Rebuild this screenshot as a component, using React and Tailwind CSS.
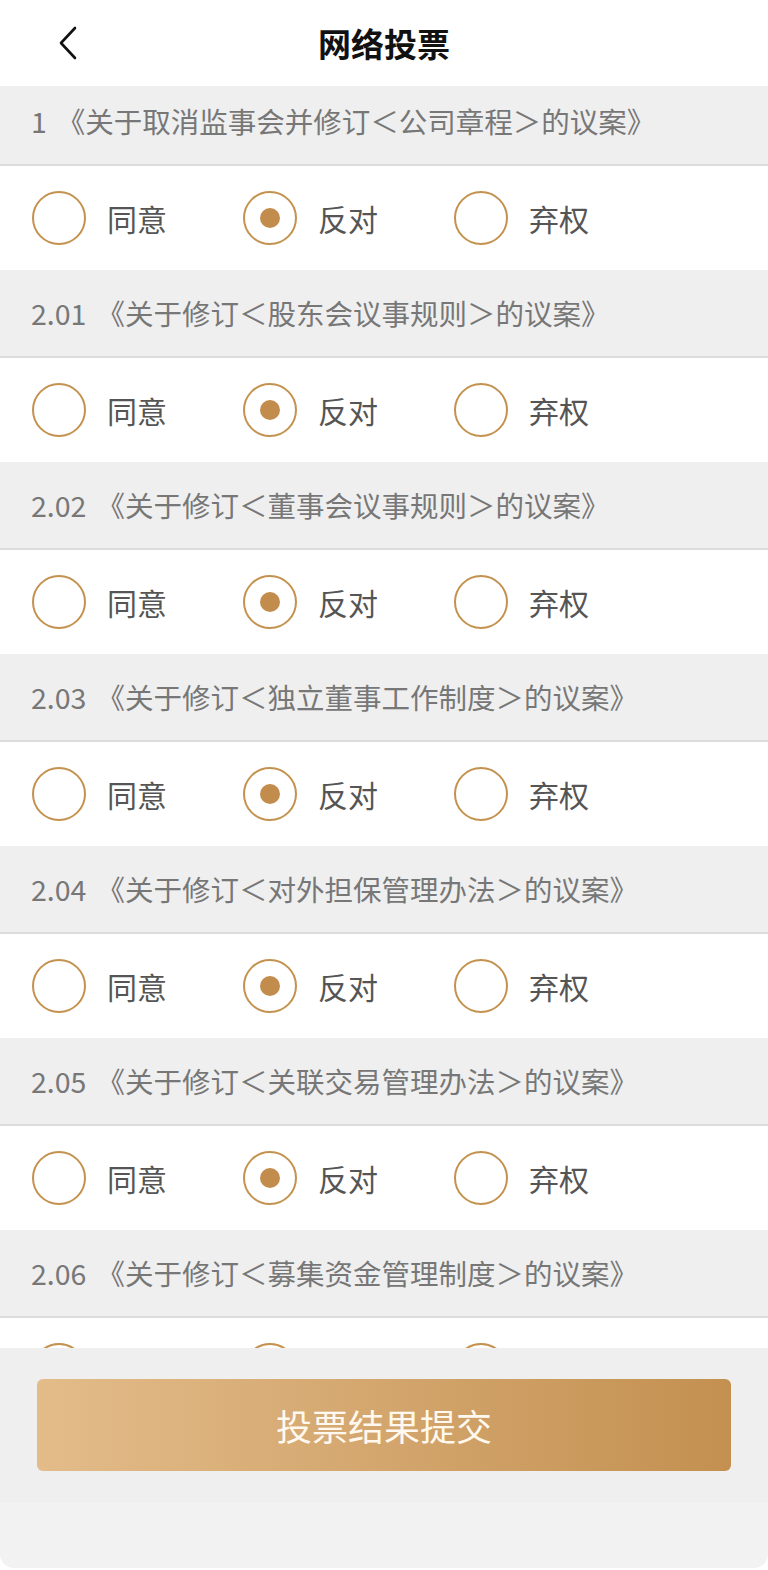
import React from "react";

const items = [
  ["1", "《关于取消监事会并修订＜公司章程＞的议案》"],
  ["2.01", "《关于修订＜股东会议事规则＞的议案》"],
  ["2.02", "《关于修订＜董事会议事规则＞的议案》"],
  ["2.03", "《关于修订＜独立董事工作制度＞的议案》"],
  ["2.04", "《关于修订＜对外担保管理办法＞的议案》"],
  ["2.05", "《关于修订＜关联交易管理办法＞的议案》"],
  ["2.06", "《关于修订＜募集资金管理制度＞的议案》"],
];

const options = ["同意", "反对", "弃权"];

function Radio({ checked }) {
  return (
    <div className="w-[54px] h-[54px] rounded-full border-2 border-[#c4914f] flex items-center justify-center shrink-0">
      {checked && <div className="w-[20px] h-[20px] rounded-full bg-[#c28d4c]" />}
    </div>
  );
}

export default function App() {
  return (
    <div
      className="w-[768px] h-[1570px] flex flex-col bg-white overflow-hidden"
      style={{ fontFamily: '"Noto Sans CJK SC", "Noto Sans", sans-serif' }}
    >
      <div className="h-[86px] shrink-0 grid grid-cols-[1fr_auto_1fr] items-center bg-white">
        <div className="pl-[58px] flex items-center">
          <svg width="20" height="34" viewBox="0 0 20 34" fill="none">
            <path d="M17 2 L3 17 L17 32" stroke="#111" strokeWidth="2.6" strokeLinecap="round" strokeLinejoin="round" />
          </svg>
        </div>
        <div className="text-[33px] font-bold text-[#111] leading-none">网络投票</div>
        <div />
      </div>

      <div className="flex-1 overflow-hidden">
        <div className="-mt-[8px]">
          {items.map(([num, title], idx) => (
            <div key={num}>
              <div className="h-[88px] bg-[#efefef] border-b-2 border-[#dcdcdc] flex items-center pl-[31px] text-[28.5px] text-[#777777] leading-none whitespace-nowrap">
                <span>{num}</span>
                <span className="ml-[10px]">{title}</span>
              </div>
              <div className="h-[104px] bg-white flex items-center pl-[32px]">
                {options.map((o, i) => (
                  <div key={o} className="w-[211px] flex items-center">
                    <Radio checked={i === 1} />
                    {idx < items.length - 1 && (
                      <span className="ml-[21px] text-[30px] text-[#555555] leading-none">{o}</span>
                    )}
                  </div>
                ))}
              </div>
            </div>
          ))}
        </div>
      </div>

      <div className="h-[222px] shrink-0 flex flex-col">
        <div className="h-[154px] bg-[#efefef] pt-[31px] px-[37px]">
          <div className="h-[92px] rounded-[6px] bg-gradient-to-r from-[#e3bc8a] to-[#c39050] flex items-center justify-center">
            <span className="text-[36px] text-[#fff8ee] leading-none">投票结果提交</span>
          </div>
        </div>
        <div className="h-[66px] bg-[#f2f2f2] rounded-b-[14px]" />
        <div className="h-[2px] bg-white" />
      </div>
    </div>
  );
}
